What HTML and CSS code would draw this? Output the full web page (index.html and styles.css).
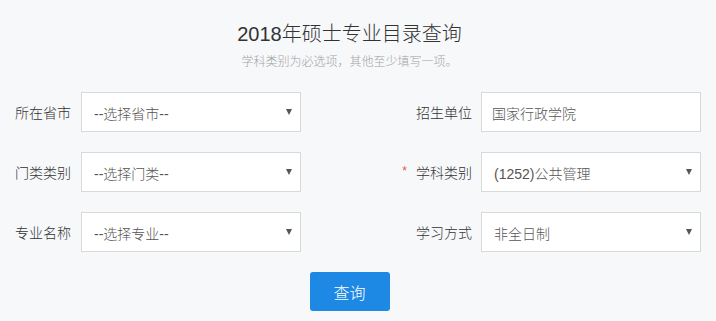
FILE: index.html
```html
<!DOCTYPE html>
<html lang="zh-CN">
<head>
<meta charset="utf-8">
<title>2018年硕士专业目录查询</title>
<link rel="stylesheet" href="styles.css">
</head>
<body>
<div class="page">
  <h1 class="title">2018年硕士专业目录查询</h1>
  <p class="hint">学科类别为必选项，其他至少填写一项。</p>
  <form class="form">
    <label class="label">所在省市</label>
    <div class="field"><span class="value">--选择省市--</span><span class="caret"></span></div>
    <label class="label label-right">招生单位</label>
    <div class="field input"><span class="value">国家行政学院</span></div>

    <label class="label">门类类别</label>
    <div class="field"><span class="value">--选择门类--</span><span class="caret"></span></div>
    <label class="label label-right"><span class="req">*</span>学科类别</label>
    <div class="field"><span class="value">(1252)公共管理</span><span class="caret"></span></div>

    <label class="label">专业名称</label>
    <div class="field"><span class="value">--选择专业--</span><span class="caret"></span></div>
    <label class="label label-right">学习方式</label>
    <div class="field"><span class="value">非全日制</span><span class="caret"></span></div>
  </form>
  <div class="actions"><button class="btn" type="button">查询</button></div>
</div>
</body>
</html>
```
FILE: styles.css
```css
html, body {
  margin: 0;
  padding: 0;
  background: #f7f8fa;
}
body {
  font-family: "Liberation Sans", "Noto Sans CJK SC", sans-serif;
  font-weight: 300;
  color: #333;
}
.page {
  width: 699px;
}
.title {
  margin: 20px 0 0;
  font-size: 20px;
  line-height: 28px;
  font-weight: 300;
  text-align: center;
  color: #333;
}
.hint {
  margin: 6px 0 0;
  font-size: 12px;
  line-height: 17px;
  text-align: center;
  color: #a3a3a3;
}
.form {
  margin-top: 21px;
  display: grid;
  grid-template-columns: 81px 220px 180px 220px;
  grid-auto-rows: 40px;
  row-gap: 20px;
}
.label {
  display: flex;
  align-items: center;
  justify-content: flex-end;
  padding-right: 10px;
  font-size: 14px;
  color: #333;
  white-space: nowrap;
}
.label-right {
  padding-right: 9px;
}
.req {
  color: #e05555;
  font-size: 12px;
  margin-right: 9px;
  position: relative;
  top: -1px;
}
.field {
  box-sizing: border-box;
  display: flex;
  align-items: center;
  justify-content: space-between;
  padding: 0 8px 0 12px;
  background: #fff;
  border: 1px solid #d9d9d9;
  font-size: 14px;
  color: #555;
}
.field.input {
  padding-left: 10px;
}
.value {
  padding-top: 2px;
}
.caret {
  width: 0;
  height: 0;
  border-left: 3.5px solid transparent;
  border-right: 3.5px solid transparent;
  border-top: 6px solid #555;
  margin-top: 0;
}
.actions {
  display: flex;
  justify-content: center;
  margin-top: 20px;
}
.btn {
  width: 80px;
  height: 39px;
  border: 0;
  border-radius: 3px;
  background: #1e88e5;
  color: #fff;
  font-family: "Liberation Sans", "Noto Sans CJK SC", sans-serif;
  font-weight: 300;
  font-size: 16px;
  padding: 0;
  cursor: pointer;
}
```
